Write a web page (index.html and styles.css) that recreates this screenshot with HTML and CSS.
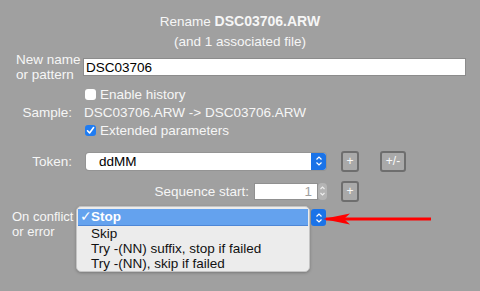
FILE: index.html
```html
<!DOCTYPE html>
<html lang="en">
<head>
  <meta charset="UTF-8">
  <title>Rename</title>
  <link rel="stylesheet" href="styles.css">
</head>
<body>
<div class="dialog">
  <div class="title">Rename <b>DSC03706.ARW</b></div>
  <div class="subtitle">(and 1 associated file)</div>

  <div class="row name-row">
    <div class="label two">New name<br>or pattern</div>
    <input class="text-input" type="text" value="DSC03706">
  </div>

  <div class="row check-row">
    <div class="label"></div>
    <label class="check"><span class="box"></span>Enable history</label>
  </div>

  <div class="row sample-row">
    <div class="label right">Sample:</div>
    <div class="sample">DSC03706.ARW -&gt; DSC03706.ARW</div>
  </div>

  <div class="row check-row ext">
    <div class="label"></div>
    <label class="check"><span class="box on">
      <svg width="11" height="11" viewBox="0 0 11 11"><path d="M2.5 5.8 L4.6 8 L8.6 2.6" fill="none" stroke="#fff" stroke-width="1.6" stroke-linecap="round" stroke-linejoin="round"/></svg>
    </span>Extended parameters</label>
  </div>

  <div class="row token-row">
    <div class="label right">Token:</div>
    <div class="select">
      <span class="select-value">ddMM</span>
      <span class="select-arrows">
        <svg width="8" height="12" viewBox="0 0 8 12"><path d="M1.5 4.5 L4 2 L6.5 4.5 M1.5 7.5 L4 10 L6.5 7.5" fill="none" stroke="#fff" stroke-width="1.2"/></svg>
      </span>
    </div>
    <button class="btn sq">+</button>
    <button class="btn wide">+/-</button>
  </div>

  <div class="row seq-row">
    <span class="seq-label">Sequence start:</span>
    <div class="seq-input">1</div>
    <span class="stepper">
      <svg width="9" height="16" viewBox="0 0 9 16"><path d="M2.5 6 L4.5 4 L6.5 6 M2.5 10 L4.5 12 L6.5 10" fill="none" stroke="#eee" stroke-width="1.1"/></svg>
    </span>
    <button class="btn sq">+</button>
  </div>

  <div class="row conflict-row">
    <div class="label two">On conflict<br>or error</div>
    <div class="menu">
      <div class="item active"><span class="tick">✓</span><b>Stop</b></div>
      <div class="item">Skip</div>
      <div class="item">Try -(NN) suffix, stop if failed</div>
      <div class="item">Try -(NN), skip if failed</div>
    </div>
    <span class="select-arrows lone">
      <svg width="8" height="12" viewBox="0 0 8 12"><path d="M1.5 4.5 L4 2 L6.5 4.5 M1.5 7.5 L4 10 L6.5 7.5" fill="none" stroke="#fff" stroke-width="1.2"/></svg>
    </span>
    <svg class="red-arrow" width="110" height="14" viewBox="0 0 110 14">
      <path d="M4 7 L109 7" stroke="#f00" stroke-width="3"/>
      <path d="M1 7 L28 1.5 L22 7 L28 12.5 Z" fill="#f00"/>
    </svg>
  </div>
</div>
</body>
</html>
```

FILE: styles.css
```css
body {
  margin: 0;
  background-color: #a0a0a0;
  font-family: "Liberation Sans", Arial, sans-serif;
  font-size: 13.5px;
  color: #f6f6f6;
}

.dialog {
  width: 480px;
  height: 291px;
  padding: 13px 14px 0 14px;
  box-sizing: border-box;
  white-space: nowrap;
}

.title {
  text-align: center;
  line-height: 16px;
}

.title b {
  font-size: 14px;
}

.subtitle {
  text-align: center;
  line-height: 16px;
  margin-top: 4px;
}

.row {
  display: flex;
  align-items: center;
}

.label {
  width: 58px;
  flex: none;
  margin-right: 11px;
  line-height: 15px;
}

.label.right {
  text-align: right;
}

.name-row {
  margin-top: 2px;
  height: 30px;
}

.label.two {
  margin-left: 2px;
  width: 56px;
}

.text-input {
  width: 383px;
  height: 18px;
  box-sizing: border-box;
  border: 1px solid #8c8c8c;
  background: #fff;
  font-family: inherit;
  font-size: 13.5px;
  color: #000;
  padding: 0 2px;
  margin: 0;
  outline: none;
}

.check-row {
  height: 18px;
  margin-top: 3px;
}

.check-row.ext {
  margin-top: 0;
}

.check {
  display: flex;
  align-items: center;
  margin-left: 2px;
}

.box {
  width: 11px;
  height: 11px;
  box-sizing: border-box;
  background: #fff;
  border-radius: 3px;
  margin-right: 4px;
  display: flex;
  align-items: center;
  justify-content: center;
}

.box.on {
  background: #1f7cf2;
}

.sample-row {
  height: 18px;
}

.sample {
  margin-left: 1px;
}

.token-row {
  height: 22px;
  margin-top: 11px;
}

.select {
  width: 240px;
  height: 17px;
  margin-left: 3px;
  background: #fff;
  border-radius: 3px;
  display: flex;
  justify-content: space-between;
  color: #000;
  box-shadow: 0 0 0 1px #949494;
}

.select-value {
  line-height: 17px;
  padding-left: 13px;
}

.select-arrows {
  width: 15px;
  height: 17px;
  background: #1a73e8;
  border-radius: 0 3px 3px 0;
  display: flex;
  align-items: center;
  justify-content: center;
}

.btn {
  height: 21px;
  box-sizing: border-box;
  border: 2px solid #6e6e6e;
  border-radius: 3px;
  background: #a9a9a9;
  color: #fafafa;
  font-family: inherit;
  font-size: 12px;
  padding: 0;
  margin-left: 15px;
}

.btn.sq {
  width: 18px;
}

.btn.wide {
  width: 26px;
  margin-left: 21px;
}

.seq-row {
  height: 22px;
  margin-top: 8px;
}

.seq-label {
  width: 235px;
  text-align: right;
  margin-right: 6px;
}

.seq-input {
  width: 62px;
  height: 15px;
  background: #fff;
  color: #a0a0a0;
  text-align: right;
  line-height: 15px;
  padding-right: 5px;
  box-sizing: border-box;
  box-shadow: 0 0 0 1px #909090;
}

.stepper {
  width: 9px;
  height: 17px;
  background: #b4b4b4;
  border-radius: 4px;
  margin-left: 1px;
  display: flex;
  align-items: center;
}

.seq-row .btn.sq {
  margin-left: 14px;
}

.conflict-row {
  margin-top: 4px;
  align-items: flex-start;
}

.conflict-row .label.two {
  margin-left: -2px;
  width: 64px;
  margin-right: 0;
  padding-top: 3px;
  font-size: 13px;
}

.menu {
  width: 234px;
  height: 66px;
  box-sizing: border-box;
  background: #ececec;
  border: 1px solid #c4c4c4;
  border-radius: 5px;
  padding-top: 2px;
  color: #111;
  box-shadow: 0 1px 3px rgba(0, 0, 0, 0.25);
}

.item {
  height: 15px;
  line-height: 15px;
  padding-left: 14px;
  position: relative;
}

.item.active {
  background: #64a2ee;
  color: #fff;
  margin: 0 1px;
  padding-left: 13px;
  height: 16px;
  line-height: 16px;
  border-bottom: 1px solid #4d86d6;
}

.tick {
  position: absolute;
  left: 2px;
  top: 0;
}

.select-arrows.lone {
  margin-top: 3px;
  margin-left: 1px;
  border-radius: 3px;
}

.red-arrow {
  margin-top: 6px;
  margin-left: -4px;
}
```
